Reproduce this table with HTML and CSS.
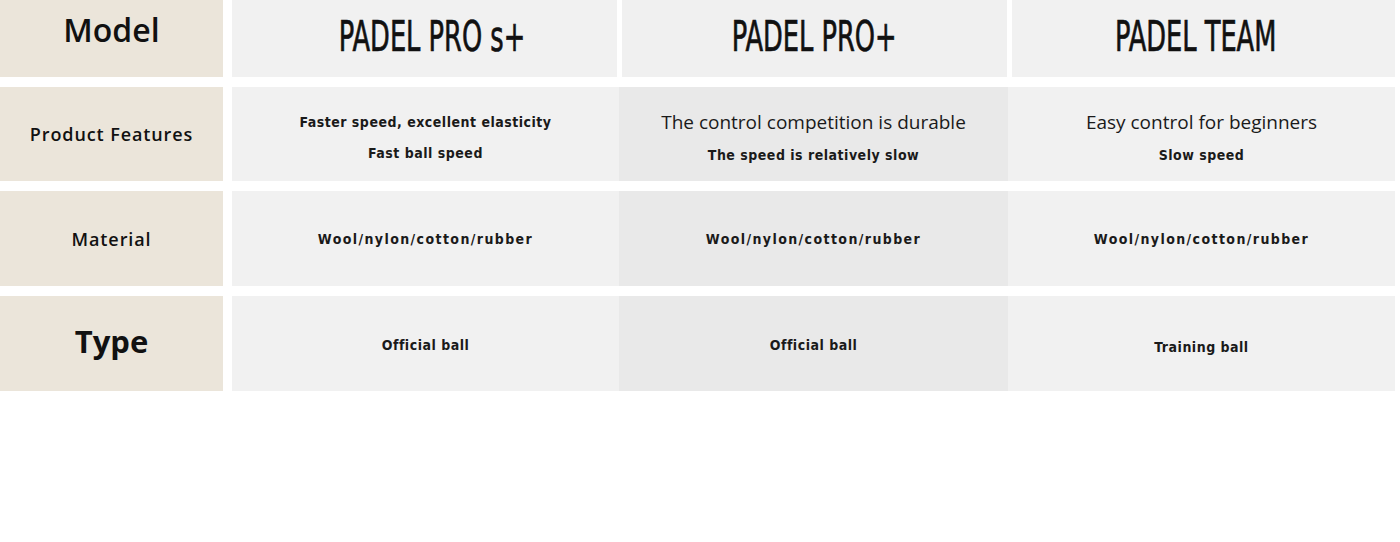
FILE: index.html
```html
<!DOCTYPE html>
<html>
<head>
<meta charset="utf-8">
<link rel="stylesheet" href="styles.css">
</head>
<body>
<div class="table">
  <div class="row head">
    <div class="label"><span class="model">Model</span></div>
    <div class="cells">
      <div class="cell c1"><span class="title t1">PADEL PRO s+</span></div>
      <div class="cell c2"><span class="title">PADEL PRO+</span></div>
      <div class="cell c3"><span class="title t3">PADEL TEAM</span></div>
    </div>
  </div>
  <div class="row body features">
    <div class="label"><span class="lab">Product Features</span></div>
    <div class="cells">
      <div class="cell c1"><span class="small">Faster speed, excellent elasticity</span><span class="small">Fast ball speed</span></div>
      <div class="cell c2"><span class="big">The control competition is durable</span><span class="small">The speed is relatively slow</span></div>
      <div class="cell c3"><span class="big">Easy control for beginners</span><span class="small">Slow speed</span></div>
    </div>
  </div>
  <div class="row body tall">
    <div class="label"><span class="lab">Material</span></div>
    <div class="cells">
      <div class="cell c1"><span class="small wide">Wool/nylon/cotton/rubber</span></div>
      <div class="cell c2"><span class="small wide">Wool/nylon/cotton/rubber</span></div>
      <div class="cell c3"><span class="small wide">Wool/nylon/cotton/rubber</span></div>
    </div>
  </div>
  <div class="row body tall types">
    <div class="label"><span class="type">Type</span></div>
    <div class="cells">
      <div class="cell c1"><span class="small">Official ball</span></div>
      <div class="cell c2"><span class="small">Official ball</span></div>
      <div class="cell c3 lower"><span class="small">Training ball</span></div>
    </div>
  </div>
</div>
</body>
</html>
```

FILE: styles.css
```css
html, body {
  margin: 0;
  padding: 0;
  background: #ffffff;
}
body {
  width: 1400px;
  height: 542px;
  overflow: hidden;
  font-family: "Open Sans", "DejaVu Sans", sans-serif;
  color: #111;
}
.table {
  width: 1395px;
  display: flex;
  flex-direction: column;
  gap: 10px;
}
.row {
  display: flex;
  gap: 9px;
  height: 94px;
}
.row.head {
  height: 77px;
}
.row.tall {
  height: 95px;
}
.label {
  width: 223px;
  flex: none;
  background: #ebe5da;
  display: flex;
  align-items: center;
  justify-content: center;
}
.cells {
  flex: 1;
  display: flex;
}
.head .cells {
  gap: 5px;
}
.cell {
  display: flex;
  flex-direction: column;
  align-items: center;
  justify-content: center;
  background: #f1f1f1;
  gap: 15px;
}
.c1 { flex: 0 0 387px; }
.c2 { flex: 0 0 389px; background: #e9e9e9; }
.c3 { flex: 1; }
.head .c1 { flex-basis: 385px; }
.head .c2 { flex-basis: 385px; background: #f0f0f0; }
.head .cell { padding-bottom: 4px; }
.features .cell { padding-top: 6px; }
.types .cell { padding-top: 3px; }
.types .lower { padding-top: 7px; }

.model {
  font-size: 32px;
  font-weight: 600;
  margin-top: -18px;
}
.lab {
  font-size: 18px;
  font-weight: 600;
  letter-spacing: 0.9px;
}
.type {
  font-size: 31px;
  font-weight: 700;
  margin-top: -6px;
}
.title {
  font-family: "DejaVu Sans Condensed", "DejaVu Sans", sans-serif;
  font-weight: 400;
  font-size: 42px;
  display: inline-block;
  transform: scaleX(0.68);
  -webkit-text-stroke: 0.7px #111;
  color: #111;
  white-space: nowrap;
}
.t1 { margin-left: 16px; }
.t3 { margin-right: 16px; }
.small {
  font-family: "DejaVu Sans Condensed", "DejaVu Sans", sans-serif;
  font-size: 14px;
  font-weight: 700;
  letter-spacing: 0.5px;
  color: #1a1a1a;
}
.small.wide {
  letter-spacing: 1.4px;
}
.big {
  font-family: "Open Sans", sans-serif;
  font-size: 19px;
  font-weight: 500;
  color: #1a1a1a;
  margin-top: -3px;
  margin-bottom: -3px;
}
```
